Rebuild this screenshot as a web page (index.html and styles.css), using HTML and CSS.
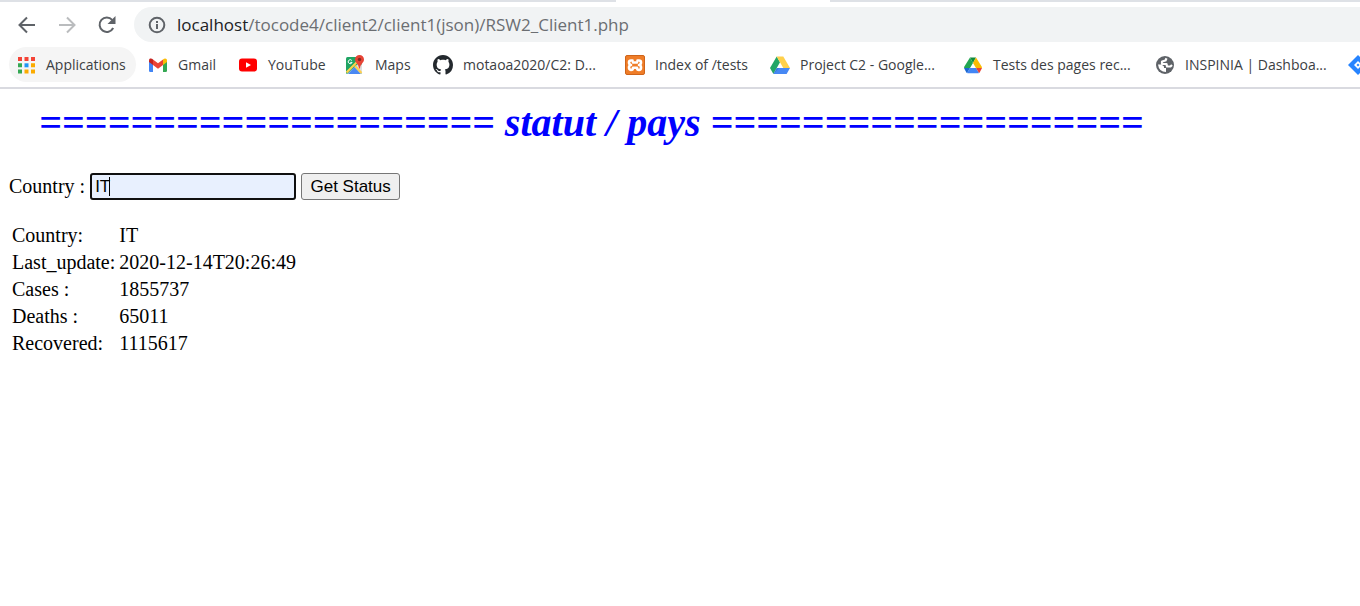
FILE: index.html
```html
<!DOCTYPE html>
<html lang="en">
<head>
<meta charset="utf-8">
<title>statut / pays</title>
<link rel="stylesheet" href="styles.css">
</head>
<body>
<header class="browser">
  <div class="tabstrip"><div class="active-tab"></div></div>
  <div class="toolbar">
    <button class="nav" aria-label="Back"><svg width="20" height="20" viewBox="0 0 20 20" fill="none" stroke="#5f6368" stroke-width="2"><path d="M18 10H3M10 2.500L2.500 10l7.500 7.500"/></svg></button>
    <button class="nav" aria-label="Forward"><svg width="20" height="20" viewBox="0 0 20 20" fill="none" stroke="#babcbe" stroke-width="2"><path d="M2 10h15M10 2.500L17.500 10 10 17.500"/></svg></button>
    <button class="nav" aria-label="Reload"><svg width="20" height="20" viewBox="0 0 20 20"><path d="M16.200 13a7.200 7.200 0 1 1-1-8.100" fill="none" stroke="#5f6368" stroke-width="2"/><path d="M18.500 1v8h-8z" fill="#5f6368"/></svg></button>
    <div class="omnibox">
      <svg width="18" height="18" viewBox="0 0 18 18"><circle cx="9" cy="9" r="7.300" fill="none" stroke="#5f6368" stroke-width="2"/><path d="M8 8h2v5H8zM8 5h2v2H8z" fill="#5f6368"/></svg>
      <span class="url"><span class="host">localhost</span>/tocode4/client2/client1(json)/RSW2_Client1.php</span>
    </div>
  </div>
  <nav class="bookmarks">
    <a href="#" class="bookmark apps"><svg width="20" height="20" viewBox="0 0 20 20"><path fill="#f44336" d="M1 2h4v4H1zM7.500 2h4v4h-4zM14 2h4v4h-4z"/><path fill="#34a853" d="M1 8.300h4v4H1zM1 14.600h4v4H1z"/><path fill="#2196f3" d="M7.500 8.300h4v4h-4z"/><path fill="#fbab00" d="M14 8.300h4v4h-4zM7.500 14.600h4v4h-4zM14 14.600h4v4h-4z"/></svg>Applications</a>
    <a href="#" class="bookmark gmail"><svg width="20" height="20" viewBox="0 0 20 20"><path fill="#4285f4" d="M0 6l4 3v8H1.300Q0 17 0 15.700z"/><path fill="#34a853" d="M14 9l4-3v9.700q0 1.300-1.300 1.300H14z"/><path fill="#fbbc04" d="M14 4.500l1-.7q1.500-.9 2.500.2.500.6.500 1.500V7l-4 3z"/><path fill="#c5221f" d="M0 7V5.500Q0 4.200 1 3.600q1-.4 2 .2l1 .7V10z"/><path fill="#ea4335" d="M4 4.500l5 3.700 5-3.700V10l-5 3.800L4 10z"/></svg>Gmail</a>
    <a href="#" class="bookmark youtube"><svg width="20" height="20" viewBox="0 0 20 20"><rect y="3.500" width="18" height="13" rx="3" fill="#f00"/><path fill="#fff" d="M7 7.200l5 2.800-5 2.800z"/></svg>YouTube</a>
    <a href="#" class="bookmark maps"><svg width="20" height="20" viewBox="0 0 20 20"><rect y="2" width="16" height="17" rx="1.500" fill="#1fa463"/><path fill="#dedede" d="M1 19L14 7l2 3v7.500Q16 19 14.500 19z"/><path fill="#4a89f3" d="M2 19l6.500-7 6.500 7z"/><path stroke="#ffd04b" stroke-width="2" d="M.5 17.500L12 6M9 11l6.500 7"/><path d="M5.800 5.500A2 2 0 1 0 6.100 7.400H4.300" fill="none" stroke="#fff"/><path fill="#e74335" d="M13.500 0A4.500 4.500 0 0 1 18 4.500c0 3.500-3.700 4-4 9h-1c-.3-5-4-5.500-4-9A4.500 4.500 0 0 1 13.500 0z"/><circle cx="13.500" cy="4.500" r="1.700" fill="#822b22"/></svg>Maps</a>
    <a href="#" class="bookmark github"><svg width="20" height="20" viewBox="0 0 16 16"><path fill="#24292e" d="M8 0C3.580 0 0 3.580 0 8c0 3.540 2.290 6.530 5.470 7.590.4.070.55-.17.55-.38 0-.19-.01-.82-.01-1.490-2.010.37-2.530-.49-2.690-.94-.09-.23-.48-.94-.82-1.130-.28-.15-.68-.52-.01-.53.63-.01 1.080.58 1.230.82.72 1.210 1.870.87 2.330.66.070-.52.280-.87.510-1.070-1.780-.2-3.640-.89-3.640-3.950 0-.87.310-1.590.82-2.150-.08-.2-.36-1.020.08-2.120 0 0 .67-.21 2.200.82.640-.18 1.320-.27 2-.27s1.360.09 2 .27c1.530-1.040 2.200-.82 2.200-.82.440 1.100.160 1.920.080 2.120.510.560.820 1.270.820 2.150 0 3.070-1.870 3.750-3.650 3.950.290.250.540.730.540 1.480 0 1.070-.01 1.930-.01 2.200 0 .21.150.46.550.38A8.010 8.010 0 0 0 16 8c0-4.420-3.580-8-8-8z"/></svg>motaoa2020/C2: D...</a>
    <a href="#" class="bookmark xampp"><svg width="20" height="20" viewBox="0 0 20 20"><rect x=".5" y=".5" width="19" height="19" rx="1.500" fill="#ef7d28" stroke="#cf641a"/><g fill="none" stroke="#fff" stroke-width="2.600" stroke-linejoin="round" stroke-linecap="round"><path d="M7.500 5.500H6Q4 5.500 4 7.500T6 10Q4 10.300 4 12.500T6 15q2 0 2-2.200h4q0 2.200 2 2.200t2-2.500-2-2.500q2-.5 2-2.500t-2-2h-1.500M8 7.500h4"/></g></svg>Index of /tests</a>
    <a href="#" class="bookmark project"><svg width="20" height="20" viewBox="0 0 20 20"><path fill="#23a566" d="M6.700 1.500L10 7.300 3.400 19 0 13z"/><path fill="#ffd04b" d="M6.700 1.500h6.600L20 13h-6.700z"/><path fill="#4688f4" d="M6.700 13H20l-3.400 6H3.400z"/><path fill="#3066be" opacity=".45" d="M6.700 13l-3.300 6 6-6z"/></svg>Project C2 - Google...</a>
    <a href="#" class="bookmark tests"><svg width="20" height="20" viewBox="0 0 20 20"><path fill="#0f8a3c" d="M6 2.500h6L9 8z"/><path fill="#22a652" d="M6 2.500L9 8l-3 5H0l.4-1.500z"/><path fill="#fbbc04" d="M12 2.500l5.600 9 .4 1.500h-6L9 8z"/><path fill="#4285f4" d="M6 13h6l3 5q-.5.300-1.500.3h-9q-1 0-1.500-.3z"/><path fill="#1a67d2" d="M0 13h6l-3 5q-.5-.3-.8-.8z"/><path fill="#ea4335" d="M12 13h6l-2.200 4.200q-.3.500-.8.800z"/></svg>Tests des pages rec...</a>
    <a href="#" class="bookmark inspinia"><svg width="20" height="20" viewBox="0 0 20 20"><circle cx="9" cy="10" r="9" fill="#5f6368"/><path fill="none" stroke="#fff" stroke-width="2.200" stroke-linejoin="round" d="M10.500 3.200L9.500 5.500 6 6.500 6 9h4.500l.5 2.500h3.500l1.500-1.500"/><path fill="#fff" d="M2 9.500h3.500l2.500 2v1.500h2v4Q3 17 2 9.500z"/></svg>INSPINIA | Dashboa...</a>
    <a href="#" class="bookmark more" aria-label="Bookmark"><svg width="20" height="20" viewBox="0 0 20 20"><path fill="#2684ff" d="M10 0l10 10-10 10L0 10z"/><path fill="#fff" d="M10 6l4 4-4 4-4-4z"/><path fill="#2684ff" d="M10 8.500l1.500 1.500-1.500 1.500L8.500 10z"/></svg></a>
  </nav>
</header>
<main class="page">
  <h1 class="title">==================== statut / pays ===================</h1>
  <form class="query">
    <label for="country">Country :</label>
    <span class="field"><input id="country" class="country" type="text" value="IT"><span class="caret"></span></span>
    <button type="button" class="submit">Get Status</button>
  </form>
  <table class="result">
    <tr><td>Country:</td><td>IT</td></tr>
    <tr><td>Last_update:</td><td>2020-12-14T20:26:49</td></tr>
    <tr><td>Cases :</td><td>1855737</td></tr>
    <tr><td>Deaths :</td><td>65011</td></tr>
    <tr><td>Recovered:</td><td>1115617</td></tr>
  </table>
</main>
</body>
</html>
```
FILE: styles.css
```css
* { box-sizing: border-box; }
body {
  margin: 0;
  background: #fff;
  color: #000;
  font-family: "Liberation Serif", "Times New Roman", serif;
  font-size: 20px;
  line-height: 23px;
  overflow-x: hidden;
}
svg { display: block; flex: none; }

.browser {
  border-bottom: 2px solid #d9dae0;
  font-family: "Open Sans", "Segoe UI", sans-serif;
  overflow: hidden;
}
.tabstrip { height: 2px; background: #dee1e6; padding-left: 616px; }
.active-tab { width: 214px; height: 2px; background: #fff; }
.toolbar { display: flex; align-items: center; padding: 5px 0 0 7px; }
.nav {
  width: 40px;
  height: 35px;
  padding: 0 10px;
  border: 0;
  background: none;
}
.omnibox {
  flex: 1;
  display: flex;
  align-items: center;
  gap: 11px;
  height: 35px;
  margin-left: 7px;
  padding-left: 14px;
  border-radius: 18px 0 0 18px;
  background: #f1f3f4;
}
.url { color: #6b6e72; font-size: 17px; white-space: nowrap; }
.host { color: #202124; }
.bookmarks { display: flex; padding: 5px 0 5px 9px; }
.bookmark {
  flex: none;
  display: flex;
  align-items: center;
  gap: 9px;
  height: 35px;
  padding-left: 9px;
  border-radius: 18px;
  color: #3c4043;
  font-size: 14px;
  text-decoration: none;
  white-space: nowrap;
}
.apps { width: 127px; margin-right: 4px; padding-left: 8px; background: #f5f5f5; }
.gmail { width: 90px; }
.youtube { width: 107px; }
.maps { width: 87px; }
.github { width: 192px; gap: 10px; }
.xampp { width: 145px; gap: 10px; }
.project { width: 194px; gap: 10px; }
.tests { width: 192px; }
.inspinia { width: 192px; }

.page { padding: 11px 9px; }
.title {
  margin: 0 0 27px 30px;
  color: #00f;
  font-size: 40px;
  font-style: italic;
  line-height: 46px;
  white-space: nowrap;
}
.query { display: flex; align-items: center; gap: 5px; margin-bottom: 21px; }
.field { position: relative; display: flex; }
.country, .submit {
  height: 27px;
  font-family: "Liberation Sans", Arial, sans-serif;
  font-size: 17px;
}
.country {
  width: 206px;
  padding: 0 3px;
  border: 2px solid #101010;
  border-radius: 3px;
  background: #e8f0fe;
  outline: none;
}
.caret { position: absolute; left: 19px; top: 4px; width: 1px; height: 19px; background: #000; }
.submit {
  width: 99px;
  padding: 0;
  border: 1px solid #767676;
  border-radius: 3px;
  background: #efefef;
  color: #000;
  white-space: nowrap;
}
.result { border-spacing: 2px; }
.result td { padding: 1px; }
```
